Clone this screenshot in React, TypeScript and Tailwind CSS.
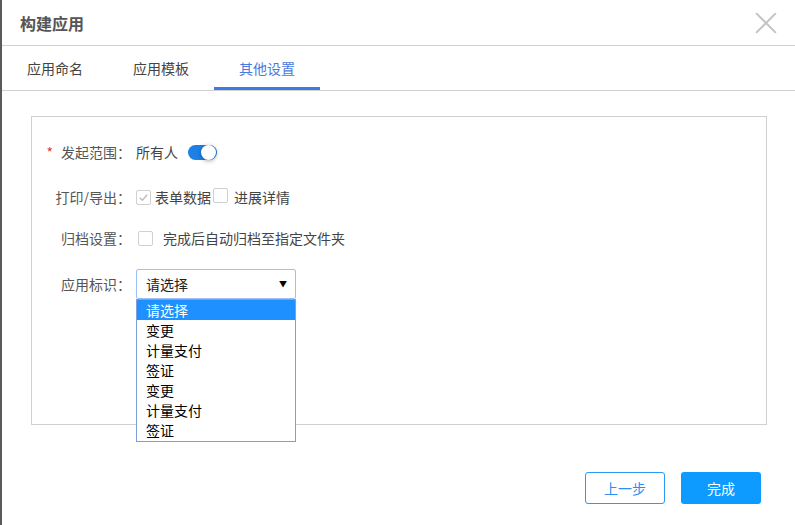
import React from 'react';

const font = { fontFamily: '"Noto Sans CJK SC", "Noto Sans", sans-serif' };

const options = ['请选择', '变更', '计量支付', '签证', '变更', '计量支付', '签证'];

const Checkbox: React.FC<{ checked?: boolean }> = ({ checked }) => (
  <span className="inline-flex h-[15px] w-[15px] items-center justify-center rounded-[2px] border border-[#d0d0d0] bg-white">
    {checked && (
      <svg viewBox="0 0 12 12" className="h-[11px] w-[11px]">
        <path d="M2 6.2 L4.8 9 L10 3" fill="none" stroke="#bdbdbd" strokeWidth="1.6" />
      </svg>
    )}
  </span>
);

export default function App() {
  return (
    <div className="h-[525px] w-[795px] overflow-hidden border-l-2 border-[#5a5a5a] bg-white text-[14px] text-[#555]" style={font}>
      {/* header */}
      <div className="flex h-[46px] items-center justify-between border-b border-[#d0d0d0] pl-[18px] pr-[18px]">
        <h1 className="text-[16px] font-bold text-[#555]">构建应用</h1>
        <svg viewBox="0 0 20 20" className="h-[22px] w-[22px]">
          <path d="M1 1 L19 19 M19 1 L1 19" stroke="#c4c4c4" strokeWidth="1.8" />
        </svg>
      </div>

      {/* tabs */}
      <div className="flex h-[45px] border-b border-[#d0d0d0]">
        <div className="flex w-[106px] items-center justify-center text-[#444]">应用命名</div>
        <div className="flex w-[106px] items-center justify-center text-[#444]">应用模板</div>
        <div className="flex w-[106px] items-center justify-center border-b-[3px] border-[#3d7ae3] pt-[3px] text-[#4a78e0]">其他设置</div>
      </div>

      {/* panel */}
      <div className="pl-[29px] pr-[28px] pt-[25px]">
        <div className="relative h-[309px] border border-[#d0d0d0] pt-[23px]">
          <div className="flex h-[24px] items-center">
            <div className="flex w-[99px] items-center justify-end">
              <span className="mr-[8px] text-[#e53935]">*</span>
              <span>发起范围：</span>
            </div>
            <div className="ml-[5px] flex items-center">
              <span className="text-[#444]">所有人</span>
              <span className="ml-[10px] flex h-[15px] w-[29px] items-center justify-end rounded-full bg-[#1e7fe6] pr-[1px]">
                <span className="h-[15px] w-[15px] rounded-full bg-white shadow-[0_1px_4px_rgba(0,0,0,0.35)]" />
              </span>
            </div>
          </div>

          <div className="mt-[21px] flex h-[24px] items-center">
            <div className="w-[99px] text-right">打印/导出：</div>
            <div className="ml-[5px] flex items-center">
              <Checkbox checked />
              <span className="ml-[4px] text-[#444]">表单数据</span>
              <span className="ml-[2px]"><Checkbox /></span>
              <span className="ml-[6px] text-[#444]">进展详情</span>
            </div>
          </div>

          <div className="mt-[17px] flex h-[24px] items-center">
            <div className="w-[99px] text-right">归档设置：</div>
            <div className="ml-[7px] flex items-center">
              <Checkbox />
              <span className="ml-[10px] text-[#444]">完成后自动归档至指定文件夹</span>
            </div>
          </div>

          <div className="mt-[19px] flex items-center">
            <div className="w-[99px] text-right">应用标识：</div>
            <div className="relative ml-[5px]">
              <div className="flex h-[30px] w-[160px] items-center justify-between rounded-[2px] border border-[#9fc0f5] pl-[9px] pr-[8px] text-[#222]">
                <span>请选择</span>
                <span className="text-[8px] text-black">▼</span>
              </div>
              <div className="absolute left-0 top-[30px] z-10 w-[160px] border border-[#7e9fd8] bg-white pb-[1px] text-black">
                {options.map((o, i) => (
                  <div
                    key={i}
                    className={`flex h-[20px] items-center pl-[9px] ${i === 0 ? 'bg-[#1e90ff] text-white' : ''}`}
                  >
                    {o}
                  </div>
                ))}
              </div>
            </div>
          </div>
        </div>
      </div>

      {/* footer */}
      <div className="mt-[47px] flex justify-end gap-[16px] pr-[34px]">
        <button className="h-[32px] w-[80px] rounded-[3px] border border-[#2b9af3] bg-white text-[#2b8ef0]">上一步</button>
        <button className="h-[32px] w-[80px] rounded-[3px] bg-[#0d9bff] text-white">完成</button>
      </div>
    </div>
  );
}
